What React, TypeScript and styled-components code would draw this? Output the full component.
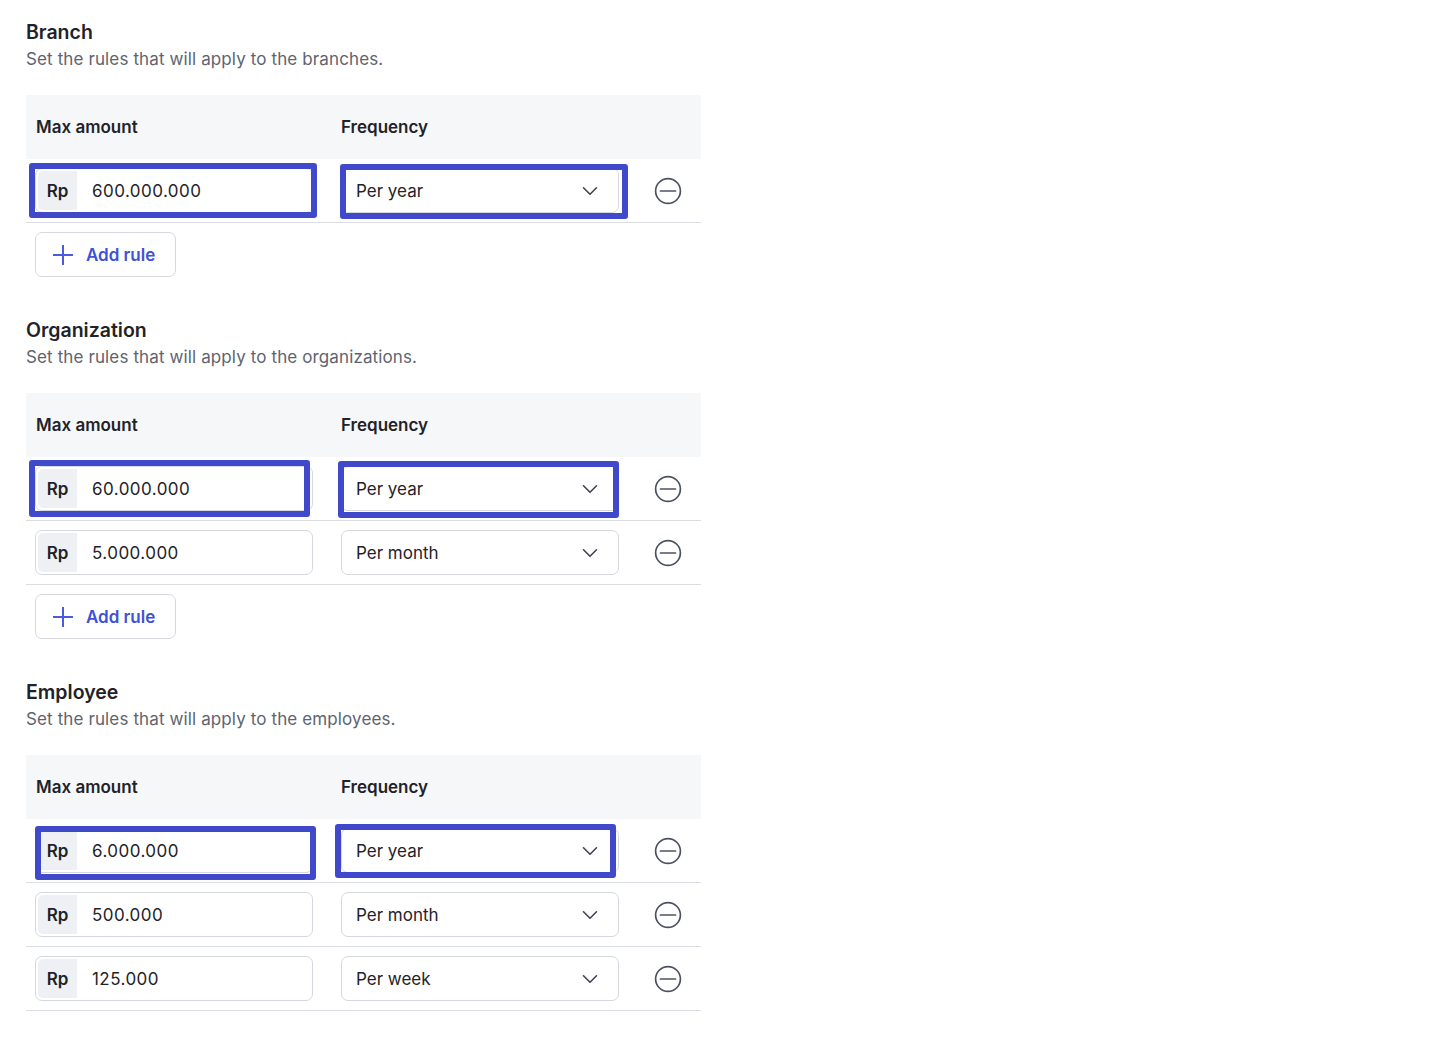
import React from 'react';
import styled, { createGlobalStyle } from 'styled-components';

type Rule = {
  amount: string;
  frequency: string;
  highlight?: boolean;
};

type Offset = { top: number; left: number; right: number; bottom: number };

type Section = {
  title: string;
  description: string;
  rules: Rule[];
  showAdd: boolean;
  amountMark?: Offset;
  freqMark?: Offset;
};

const sections: Section[] = [
  {
    title: 'Branch',
    description: 'Set the rules that will apply to the branches.',
    rules: [{ amount: '600.000.000', frequency: 'Per year', highlight: true }],
    showAdd: true,
    amountMark: { top: -5, left: -6, right: -4, bottom: -5 },
    freqMark: { top: -4, left: -1, right: -9, bottom: -6 },
  },
  {
    title: 'Organization',
    description: 'Set the rules that will apply to the organizations.',
    rules: [
      { amount: '60.000.000', frequency: 'Per year', highlight: true },
      { amount: '5.000.000', frequency: 'Per month' },
    ],
    showAdd: true,
    amountMark: { top: -6, left: -6, right: 3, bottom: -6 },
    freqMark: { top: -5, left: -3, right: 0, bottom: -7 },
  },
  {
    title: 'Employee',
    description: 'Set the rules that will apply to the employees.',
    rules: [
      { amount: '6.000.000', frequency: 'Per year', highlight: true },
      { amount: '500.000', frequency: 'Per month' },
      { amount: '125.000', frequency: 'Per week' },
    ],
    showAdd: false,
    amountMark: { top: -2, left: 0, right: -3, bottom: -7 },
    freqMark: { top: -4, left: -6, right: 3, bottom: -5 },
  },
];

const GlobalStyle = createGlobalStyle`
  body {
    margin: 0;
    background: #ffffff;
    font-family: Inter, "Noto Sans", "Liberation Sans", sans-serif;
    color: #1f2329;
  }
`;

const Page = styled.div`
  padding: 18px 0 30px 26px;
  width: 675px;
  display: flex;
  flex-direction: column;
  gap: 39px;
`;

const Block = styled.section`
  display: flex;
  flex-direction: column;
`;

const Title = styled.h2`
  margin: 0;
  font-size: 19.5px;
  line-height: 28px;
  font-weight: 600;
  color: #1f2329;
`;

const Description = styled.p`
  margin: 1px 0 0;
  font-size: 17px;
  line-height: 24px;
  letter-spacing: 0.12px;
  color: #5d6470;
`;

const Table = styled.div`
  margin-top: 24px;
  display: flex;
  flex-direction: column;
`;

const Grid = styled.div`
  display: grid;
  grid-template-columns: 278px 278px 1fr;
  column-gap: 28px;
  align-items: center;
  padding: 0 12px 0 9px;
`;

const HeaderRow = styled(Grid)`
  height: 64px;
  background: #f6f7f9;
`;

const HeaderCell = styled.div<{ $inset?: number }>`
  padding-left: ${p => p.$inset ?? 0}px;
  font-size: 17px;
  font-weight: 600;
  color: #1f2329;
`;

const Row = styled(Grid)`
  height: 63px;
  border-bottom: 1px solid #dadde2;
`;

const Cell = styled.div`
  position: relative;
  display: flex;
  align-items: center;
`;

const Mark = styled.div`
  position: absolute;
  border: 6px solid #4149cb;
  border-radius: 3px;
  pointer-events: none;
`;

const Field = styled.div`
  width: 100%;
  height: 45px;
  box-sizing: border-box;
  border: 1px solid #d5d9df;
  border-radius: 7px;
  background: #fff;
  display: flex;
  align-items: center;
  padding: 2px;
`;

const Prefix = styled.span`
  width: 39px;
  height: 100%;
  border-radius: 5px 0 0 5px;
  background: #eef0f3;
  display: flex;
  align-items: center;
  justify-content: center;
  font-size: 17px;
  font-weight: 600;
  color: #1f2329;
`;

const Value = styled.span`
  margin-left: 15px;
  font-size: 17px;
  letter-spacing: 0.45px;
  color: #1f2329;
`;

const Select = styled(Field)`
  padding: 0 20px 0 14px;
  justify-content: space-between;
`;

const SelectText = styled.span`
  font-size: 17px;
  color: #1f2329;
`;

const RemoveButton = styled.button`
  border: none;
  background: none;
  padding: 0;
  margin: 0 auto;
  display: flex;
  cursor: pointer;
`;

const AddButton = styled.button`
  margin: 9px 0 0 9px;
  width: 141px;
  height: 45px;
  border: 1px solid #d5d9df;
  border-radius: 7px;
  background: #fff;
  display: flex;
  align-items: center;
  gap: 12px;
  padding: 0 0 0 16px;
  font-family: inherit;
  font-size: 17px;
  font-weight: 600;
  color: #3e51d9;
  cursor: pointer;
`;

const Chevron = () => (
  <svg width="16" height="10" viewBox="0 0 16 10" fill="none">
    <path d="M1.5 1.8L8 8.2L14.5 1.8" stroke="#3c4250" strokeWidth="1.6" strokeLinecap="round" strokeLinejoin="round" />
  </svg>
);

const MinusCircle = () => (
  <svg width="28" height="28" viewBox="0 0 28 28" fill="none">
    <circle cx="14" cy="14" r="12.4" stroke="#4b5261" strokeWidth="1.7" />
    <path d="M6.5 14H21.5" stroke="#4b5261" strokeWidth="1.7" strokeLinecap="round" />
  </svg>
);

const Plus = () => (
  <svg width="22" height="22" viewBox="0 0 22 22" fill="none">
    <path d="M11 1V21M1 11H21" stroke="#4a5be0" strokeWidth="2" />
  </svg>
);

const markStyle = (o: Offset) => ({ top: o.top, left: o.left, right: o.right, bottom: o.bottom });

const RuleRow: React.FC<{ rule: Rule; section: Section }> = ({ rule, section }) => (
  <Row>
    <Cell>
      <Field>
        <Prefix>Rp</Prefix>
        <Value>{rule.amount}</Value>
      </Field>
      {rule.highlight && section.amountMark && <Mark style={markStyle(section.amountMark)} />}
    </Cell>
    <Cell>
      <Select>
        <SelectText>{rule.frequency}</SelectText>
        <Chevron />
      </Select>
      {rule.highlight && section.freqMark && <Mark style={markStyle(section.freqMark)} />}
    </Cell>
    <Cell>
      <RemoveButton aria-label="Remove rule">
        <MinusCircle />
      </RemoveButton>
    </Cell>
  </Row>
);

const App: React.FC = () => (
  <>
    <GlobalStyle />
    <Page>
      {sections.map(section => (
        <Block key={section.title}>
          <Title>{section.title}</Title>
          <Description>{section.description}</Description>
          <Table>
            <HeaderRow>
              <HeaderCell $inset={1}>Max amount</HeaderCell>
              <HeaderCell>Frequency</HeaderCell>
              <div />
            </HeaderRow>
            {section.rules.map(rule => (
              <RuleRow key={rule.amount} rule={rule} section={section} />
            ))}
          </Table>
          {section.showAdd && (
            <AddButton>
              <Plus />
              Add rule
            </AddButton>
          )}
        </Block>
      ))}
    </Page>
  </>
);

export default App;
